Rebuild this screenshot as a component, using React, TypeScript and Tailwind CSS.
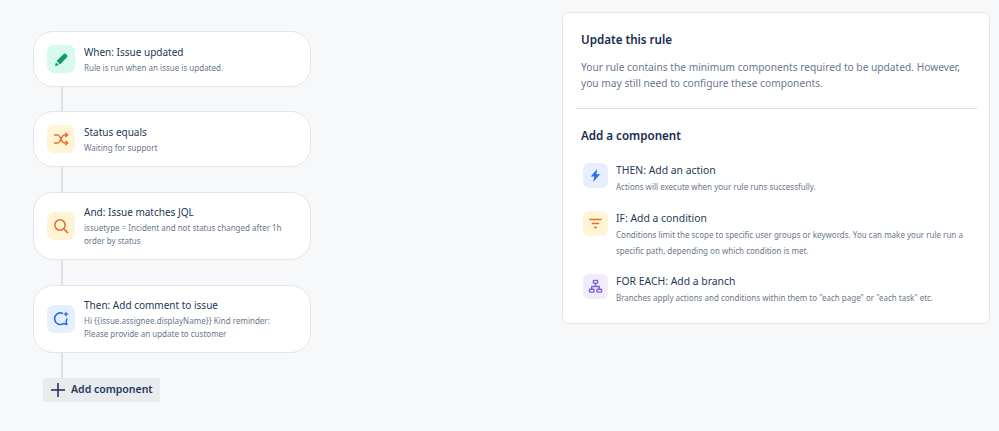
import type { ReactNode } from "react";

function Pencil() {
  return (
    <svg viewBox="0 0 16 16" className="h-[15px] w-[15px]" fill="#0b9a6d">
      <path d="M10.600 1.900a1.300 1.300 0 0 1 1.800 0l1.700 1.700a1.300 1.300 0 0 1 0 1.800l-7.800 7.800-3.500-3.500z" />
      <path d="M2 11l3.100 3.100-3.900.9z" />
    </svg>
  );
}

function Shuffle() {
  return (
    <svg viewBox="0 0 16 16" className="h-[16px] w-[16px]" fill="none" stroke="#e8702a" strokeWidth="1.500" strokeLinecap="round" strokeLinejoin="round">
      <path d="M1.500 4h2.800c1.100 0 1.700.5 2.300 1.400l2.800 5.200c.5.9 1.200 1.400 2.300 1.400h2.800" />
      <path d="M1.500 12h2.800c1.100 0 1.700-.5 2.300-1.400l2.800-5.200C9.900 4.500 10.600 4 11.700 4h2.800" />
      <path d="M12.800 2.200 14.500 4l-1.700 1.800M12.800 10.200l1.700 1.800-1.700 1.800" />
    </svg>
  );
}

function Search() {
  return (
    <svg viewBox="0 0 16 16" className="h-[16px] w-[16px]" fill="none" stroke="#e8702a" strokeWidth="1.600" strokeLinecap="round">
      <circle cx="7" cy="7" r="5.200" />
      <path d="m10.900 10.900 3.700 3.700" />
    </svg>
  );
}

function Comment() {
  return (
    <svg viewBox="0 0 16 16" className="h-[16px] w-[16px]" fill="none" stroke="#2f6bf0" strokeWidth="1.600" strokeLinecap="round" strokeLinejoin="round">
      <path d="M9.500 2.300A5.800 5.800 0 1 0 10.500 12.600l3.300.9-.8-2.900A5.800 5.800 0 0 0 13.800 8" />
      <path d="M13 1.500v3.400M11.300 3.200h3.400" strokeWidth="1.300" />
    </svg>
  );
}

function Bolt() {
  return (
    <svg viewBox="0 0 16 16" className="h-[15px] w-[15px]" fill="#2f6bf0">
      <path d="M9.800 1 3 9h3.800l-1.300 6 7.500-8.400H9z" />
    </svg>
  );
}

function Filter() {
  return (
    <svg viewBox="0 0 16 16" className="h-[15px] w-[15px]" fill="none" stroke="#ef6a1a" strokeWidth="1.500">
      <path d="M1.500 3.800h13M4 8h8M6.500 12.200h3" />
    </svg>
  );
}

function Branch() {
  return (
    <svg viewBox="0 0 16 16" className="h-[15px] w-[15px]" fill="none" stroke="#8062d6" strokeWidth="1.500">
      <rect x="5.700" y="1.500" width="4.600" height="3" rx="0.800" />
      <rect x="1.500" y="11" width="5" height="3" rx="0.800" />
      <rect x="9.500" y="11" width="5" height="3" rx="0.800" />
      <path d="M8 4.500V8M4 11V8h8v3" />
    </svg>
  );
}

function StepCard({ icon, tint, title, lines, height }: { icon: ReactNode; tint: string; title: string; lines: string[]; height: string }) {
  return (
    <div className={`flex w-[278px] items-center rounded-[20px] border border-[#e3e5e9] bg-white pl-[13px] ${height}`}>
      <div className={`flex h-[28px] w-[28px] shrink-0 items-center justify-center rounded-[7px] ${tint}`}>{icon}</div>
      <div className="ml-[9px] min-w-0">
        <p className="text-[10px] leading-[14px] text-[#253858]">{title}</p>
        <div className="mt-[2px]">
          {lines.map((line) => (
            <p key={line} className="whitespace-nowrap text-[8px] leading-[13px] text-[#6b778c]">
              {line}
            </p>
          ))}
        </div>
      </div>
    </div>
  );
}

function Connector({ height }: { height: string }) {
  return <div className={`ml-[28px] w-[2px] bg-[#dfe1e6] ${height}`} />;
}

function OptionRow({ icon, tint, title, lines, className }: { icon: ReactNode; tint: string; title: string; lines: string[]; className: string }) {
  return (
    <div className={`flex ${className}`}>
      <div className={`flex h-[25px] w-[25px] shrink-0 items-center justify-center rounded-[6px] ${tint}`}>{icon}</div>
      <div className="ml-[8px]">
        <p className="text-[10.400px] leading-[14px] text-[#253858]">{title}</p>
        <div className="mt-[2px]">
          {lines.map((line) => (
            <p key={line} className="whitespace-nowrap text-[8px] leading-[16px] text-[#6b778c]">
              {line}
            </p>
          ))}
        </div>
      </div>
    </div>
  );
}

export default function App() {
  return (
    <div className="flex h-[431px] w-[999px] overflow-hidden bg-[#f7f8f9] font-['Noto_Sans',sans-serif]">
      <div className="ml-[33px] mt-[31px] w-[278px]">
        <StepCard icon={<Pencil />} tint="bg-[#d6fbec]" title="When: Issue updated" lines={["Rule is run when an issue is updated."]} height="h-[56px]" />
        <Connector height="h-[24px]" />
        <StepCard icon={<Shuffle />} tint="bg-[#fff4d6]" title="Status equals" lines={["Waiting for support"]} height="h-[56px]" />
        <Connector height="h-[25px]" />
        <StepCard
          icon={<Search />}
          tint="bg-[#fff4d6]"
          title="And: Issue matches JQL"
          lines={["issuetype = Incident and not status changed after 1h", "order by status"]}
          height="h-[68px]"
        />
        <Connector height="h-[25px]" />
        <StepCard
          icon={<Comment />}
          tint="bg-[#e6effe]"
          title="Then: Add comment to issue"
          lines={["Hi {{issue.assignee.displayName}} Kind reminder:", "Please provide an update to customer"]}
          height="h-[68px]"
        />
        <Connector height="h-[25px]" />
        <button type="button" className="ml-[10px] flex h-[24px] w-[117px] items-center whitespace-nowrap rounded-[3px] bg-[#e9ebee] pl-[8px] text-[10.500px] font-semibold text-[#253858]">
          <svg viewBox="0 0 14 14" className="h-[14px] w-[14px]" fill="none" stroke="#172b4d" strokeWidth="1.500">
            <path d="M7 0v14M0 7h14" />
          </svg>
          <span className="ml-[6px]">Add component</span>
        </button>
      </div>

      <div className="ml-[251px] mt-[12px] h-[312px] w-[428px] rounded-[6px] border border-[#e3e5e9] bg-white pl-[13px] pr-[12px] pt-[19px]">
        <div className="pl-[5px]">
          <h2 className="text-[11.600px] font-semibold leading-[16px] text-[#172b4d]">Update this rule</h2>
          <p className="mt-[11px] whitespace-nowrap text-[10.200px] leading-[16px] text-[#6b778c]">
            Your rule contains the minimum components required to be updated. However,
            <br />
            you may still need to configure these components.
          </p>
        </div>
        <div className="mt-[17px] h-[1px] bg-[#d9dbe3]" />
        <div className="pl-[5px]">
          <h2 className="mt-[19px] text-[11.600px] font-semibold leading-[16px] text-[#172b4d]">Add a component</h2>
          <OptionRow className="mt-[19px] pl-[2px]" icon={<Bolt />} tint="bg-[#e6effe]" title="THEN: Add an action" lines={["Actions will execute when your rule runs successfully."]} />
          <OptionRow
            className="mt-[16px] pl-[2px]"
            icon={<Filter />}
            tint="bg-[#fff4d6]"
            title="IF: Add a condition"
            lines={["Conditions limit the scope to specific user groups or keywords. You can make your rule run a", "specific path, depending on which condition is met."]}
          />
          <OptionRow className="mt-[15px] pl-[2px]" icon={<Branch />} tint="bg-[#f1ecfc]" title="FOR EACH: Add a branch" lines={['Branches apply actions and conditions within them to "each page" or "each task" etc.']} />
        </div>
      </div>
    </div>
  );
}
